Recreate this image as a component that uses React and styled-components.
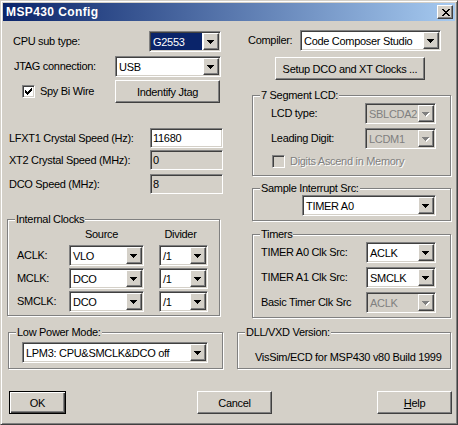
import React from 'react';
import styled, { createGlobalStyle, css } from 'styled-components';

const C = {
  face: '#d4d0c8',
  hi: '#ffffff',
  shadow: '#808080',
  dark: '#404040',
  navy: '#0a246a',
};

const Global = createGlobalStyle`
  html, body { margin: 0; padding: 0; background: ${C.face}; }
  body {
    font-family: "Liberation Sans", Arial, sans-serif;
    font-size: 11px;
    letter-spacing: -0.3px;
    color: #000;
  }
  * { box-sizing: border-box; }
`;

const sunken = css`
  border: 1px solid;
  border-color: ${C.shadow} ${C.hi} ${C.hi} ${C.shadow};
  box-shadow: inset 1px 1px 0 ${C.dark}, inset -1px -1px 0 ${C.face};
`;

const raised = css`
  border: 1px solid;
  border-color: ${C.hi} ${C.dark} ${C.dark} ${C.hi};
  box-shadow: inset -1px -1px 0 ${C.shadow}, inset 1px 1px 0 ${C.face};
`;

const Window = styled.div`
  width: 458px;
  height: 425px;
  display: flex;
  flex-direction: column;
  background: ${C.face};
  border: 1px solid;
  border-color: ${C.face} ${C.dark} ${C.dark} ${C.face};
  box-shadow: inset 1px 1px 0 ${C.hi}, inset -1px -1px 0 ${C.shadow};
  padding: 2px;
`;

const TitleBar = styled.div`
  height: 18px;
  flex-shrink: 0;
  margin-bottom: 1px;
  display: flex;
  align-items: center;
  padding: 0 2px 0 3px;
  background: linear-gradient(to right, ${C.navy}, #a6caf0);
`;

const Title = styled.span`
  color: #fff;
  font-weight: bold;
  font-size: 12px;
  letter-spacing: 0.4px;
`;

const CloseBtn = styled.div`
  ${raised};
  margin-left: auto;
  width: 16px;
  height: 14px;
  background: ${C.face};
  display: flex;
  align-items: center;
  justify-content: center;
  padding-left: 1px;
`;

const Columns = styled.div`
  display: flex;
  gap: 14px;
  padding: 0 4px;
`;

const Column = styled.div`
  display: flex;
  flex-direction: column;
  align-items: flex-start;
  width: ${(p) => p.$w}px;
  flex-shrink: 0;
`;

const Row = styled.div`
  display: flex;
  align-items: center;
  flex-shrink: 0;
  height: ${(p) => p.$h || 21}px;
  margin-top: ${(p) => p.$mt || 0}px;
  padding-left: ${(p) => p.$pl || 0}px;
`;

const Label = styled.span`
  display: block;
  width: ${(p) => (p.$w ? `${p.$w}px` : 'auto')};
  flex-shrink: 0;
  white-space: nowrap;
  line-height: 13px;
`;

const ComboBox = styled.div`
  ${sunken};
  width: ${(p) => p.$w}px;
  height: 21px;
  flex-shrink: 0;
  display: flex;
  padding: 1px;
  background: ${(p) => (p.$disabled ? C.face : C.hi)};
`;

const ComboValue = styled.div`
  flex: 1;
  min-width: 0;
  display: flex;
  align-items: center;
  white-space: nowrap;
  overflow: hidden;
  padding-left: 2px;
  margin-right: 1px;
  background: ${(p) => (p.$selected ? C.navy : 'transparent')};
  color: ${(p) => (p.$selected ? '#fff' : p.$disabled ? C.shadow : '#000')};
`;

const DropBtn = styled.div`
  ${raised};
  width: 16px;
  height: 100%;
  flex-shrink: 0;
  background: ${C.face};
  display: flex;
  align-items: center;
  justify-content: center;
  padding-top: 1px;
`;

const Edit = styled.div`
  ${sunken};
  width: ${(p) => p.$w}px;
  height: 20px;
  flex-shrink: 0;
  display: flex;
  align-items: center;
  padding: 1px 1px 1px 2px;
  background: ${(p) => (p.$readonly ? C.face : C.hi)};
`;

const Button = styled.button`
  ${raised};
  width: ${(p) => p.$w}px;
  height: 23px;
  flex-shrink: 0;
  margin: ${(p) => p.$mt || 0}px 0 0 ${(p) => (p.$push ? 'auto' : `${p.$ml || 0}px`)};
  padding: 0;
  background: ${C.face};
  font: inherit;
  letter-spacing: inherit;
  color: #000;
  ${(p) =>
    p.$default &&
    css`
      border: 1px solid #000;
      box-shadow: inset 1px 1px 0 ${C.hi}, inset -1px -1px 0 ${C.dark},
        inset -2px -2px 0 ${C.shadow};
    `}
`;

const CheckWrap = styled.div`
  display: flex;
  align-items: center;
  gap: 5px;
  width: ${(p) => (p.$w ? `${p.$w}px` : 'auto')};
  flex-shrink: 0;
  margin-left: ${(p) => p.$ml || 0}px;
`;

const CheckBox = styled.div`
  ${sunken};
  width: 13px;
  height: 13px;
  flex-shrink: 0;
  background: ${(p) => (p.$disabled ? C.face : C.hi)};
  display: flex;
  align-items: center;
  justify-content: center;
`;

const CheckText = styled.span`
  white-space: nowrap;
  line-height: 13px;
  color: ${(p) => (p.$disabled ? C.shadow : '#000')};
  text-shadow: ${(p) => (p.$disabled ? `1px 1px 0 ${C.hi}` : 'none')};
`;

const Group = styled.fieldset`
  margin: ${(p) => p.$mt}px 0 0 ${(p) => p.$ml || 0}px;
  padding: 0;
  width: ${(p) => p.$w}px;
  height: ${(p) => p.$h}px;
  min-inline-size: 0;
  flex-shrink: 0;
  border: 1px solid ${C.shadow};
  box-shadow: inset 1px 1px 0 ${C.hi}, 1px 1px 0 ${C.hi};
`;

const Legend = styled.legend`
  margin-left: 7px;
  padding: 0 1px;
  line-height: 13px;
  background: ${C.face};
  white-space: nowrap;
`;

const GroupBody = styled.div`
  display: flex;
  flex-direction: column;
  align-items: flex-start;
  padding: ${(p) => p.$pt || 0}px 0 0 ${(p) => p.$pl || 0}px;
`;

const ClockGrid = styled.div`
  display: grid;
  grid-template-columns: 37px 75px 49px;
  column-gap: 15px;
  row-gap: 2px;
  padding: 2px 0 0 9px;
`;

const ColHead = styled.div`
  line-height: 13px;
  margin-bottom: 2px;
  text-align: center;
  padding-right: ${(p) => p.$pr || 0}px;
  white-space: nowrap;
`;

const GridLabel = styled.div`
  align-self: center;
  line-height: 13px;
  white-space: nowrap;
`;

const StaticText = styled.div`
  line-height: 13px;
  white-space: nowrap;
`;

const ButtonRow = styled.div`
  display: flex;
  margin-top: 22px;
  padding: 0 3px 0 6px;
`;

const ARROW = 'M0 0h7v1H0z M1 1h5v1H1z M2 2h3v1H2z M3 3h1v1H3z';
const CHECK =
  'M6 0h1v1h-1z M5 1h2v1h-2z M0 2h1v1H0z M4 2h3v1H4z M0 3h2v1H0z M3 3h3v1H3z M0 4h5v1H0z M1 5h3v1H1z M2 6h1v1H2z';
const CLOSE =
  'M0 0h2v1H0z M6 0h2v1H6z M1 1h2v1H1z M5 1h2v1H5z M2 2h4v1H2z M3 3h2v1H3z M2 4h4v1H2z M1 5h2v1H1z M5 5h2v1H5z M0 6h2v1H0z M6 6h2v1H6z';

const Arrow = ({ disabled }) => (
  <svg width="8" height="5" viewBox="0 0 8 5" shapeRendering="crispEdges">
    {disabled && <path d={ARROW} fill={C.hi} transform="translate(1,1)" />}
    <path d={ARROW} fill={disabled ? C.shadow : '#000'} />
  </svg>
);

const Combo = ({ w, value, selected, disabled }) => (
  <ComboBox $w={w} $disabled={disabled}>
    <ComboValue $selected={selected} $disabled={disabled}>
      {value}
    </ComboValue>
    <DropBtn>
      <Arrow disabled={disabled} />
    </DropBtn>
  </ComboBox>
);

const Check = ({ checked, disabled, label, w, ml }) => (
  <CheckWrap $w={w} $ml={ml}>
    <CheckBox $disabled={disabled}>
      {checked && (
        <svg width="7" height="7" viewBox="0 0 7 7" shapeRendering="crispEdges">
          <path d={CHECK} fill="#000" />
        </svg>
      )}
    </CheckBox>
    <CheckText $disabled={disabled}>{label}</CheckText>
  </CheckWrap>
);

const clocks = [
  { name: 'ACLK:', src: 'VLO', div: '/1' },
  { name: 'MCLK:', src: 'DCO', div: '/1' },
  { name: 'SMCLK:', src: 'DCO', div: '/1' },
];

export default function App() {
  return (
    <>
      <Global />
      <Window>
        <TitleBar>
          <Title>MSP430 Config</Title>
          <CloseBtn>
            <svg width="8" height="7" viewBox="0 0 8 7" shapeRendering="crispEdges">
              <path d={CLOSE} fill="#000" />
            </svg>
          </CloseBtn>
        </TitleBar>

        <Columns>
          <Column $w={216}>
            <Row $mt={9} $pl={6}>
              <Label $w={136}>CPU sub type:</Label>
              <Combo w={72} value="G2553" selected />
            </Row>
            <Row $mt={4} $pl={7}>
              <Label $w={101}>JTAG connection:</Label>
              <Combo w={106} value="USB" />
            </Row>
            <Row $mt={3} $h={23} $pl={15}>
              <Check w={93} checked label="Spy Bi Wire" />
              <Button $w={105}>Indentify Jtag</Button>
            </Row>
            <Row $mt={25} $h={20} $pl={2}>
              <Label $w={141}>LFXT1 Crystal Speed (Hz):</Label>
              <Edit $w={73}>11680</Edit>
            </Row>
            <Row $mt={2} $h={20} $pl={2}>
              <Label $w={141}>XT2 Crystal Speed (MHz):</Label>
              <Edit $w={73} $readonly>0</Edit>
            </Row>
            <Row $mt={4} $h={20} $pl={2}>
              <Label $w={141}>DCO Speed (MHz):</Label>
              <Edit $w={73} $readonly>8</Edit>
            </Row>

            <Group $mt={19} $w={213} $h={103}>
              <Legend>Internal Clocks</Legend>
              <ClockGrid>
                <div />
                <ColHead $pr={10}>Source</ColHead>
                <ColHead $pr={6}>Divider</ColHead>
                {clocks.map((c) => (
                  <React.Fragment key={c.name}>
                    <GridLabel>{c.name}</GridLabel>
                    <Combo w={75} value={c.src} />
                    <Combo w={49} value={c.div} />
                  </React.Fragment>
                ))}
              </ClockGrid>
            </Group>

            <Group $mt={10} $ml={1} $w={215} $h={43}>
              <Legend>Low Power Mode:</Legend>
              <GroupBody $pt={3} $pl={13}>
                <Combo w={186} value="LPM3: CPU&SMCLK&DCO off" />
              </GroupBody>
            </Group>
          </Column>

          <Column $w={214}>
            <Row $mt={8} $pl={11}>
              <Label $w={52}>Compiler:</Label>
              <Combo w={141} value="Code Composer Studio" />
            </Row>
            <Button $w={150} $mt={6} $ml={38}>
              Setup DCO and XT Clocks ...
            </Button>

            <Group $mt={9} $ml={15} $w={199} $h={87}>
              <Legend>7 Segment LCD:</Legend>
              <GroupBody $pt={1} $pl={18}>
                <Row>
                  <Label $w={94}>LCD type:</Label>
                  <Combo w={71} value="SBLCDA2" disabled />
                </Row>
                <Row $mt={4}>
                  <Label $w={94}>Leading Digit:</Label>
                  <Combo w={71} value="LCDM1" disabled />
                </Row>
                <Row $mt={6} $h={13}>
                  <Check ml={1} disabled label="Digits Ascend in Memory" />
                </Row>
              </GroupBody>
            </Group>

            <Group $mt={6} $ml={15} $w={199} $h={39}>
              <Legend>Sample Interrupt Src:</Legend>
              <GroupBody $pl={49}>
                <Combo w={134} value="TIMER A0" />
              </GroupBody>
            </Group>

            <Group $mt={7} $ml={15} $w={199} $h={90}>
              <Legend>Timers</Legend>
              <GroupBody $pt={1} $pl={8}>
                <Row>
                  <Label $w={105}>TIMER A0 Clk Src:</Label>
                  <Combo w={70} value="ACLK" />
                </Row>
                <Row $mt={4}>
                  <Label $w={105}>TIMER A1 Clk Src:</Label>
                  <Combo w={70} value="SMCLK" />
                </Row>
                <Row $mt={4}>
                  <Label $w={105}>Basic Timer Clk Src</Label>
                  <Combo w={70} value="ACLK" disabled />
                </Row>
              </GroupBody>
            </Group>

            <Group $mt={8} $w={214} $h={43}>
              <Legend>DLL/VXD Version:</Legend>
              <GroupBody $pt={12} $pl={17}>
                <StaticText>VisSim/ECD for MSP430 v80 Build 1999</StaticText>
              </GroupBody>
            </Group>
          </Column>
        </Columns>

        <ButtonRow>
          <Button $w={57} $default>
            OK
          </Button>
          <Button $w={75} $ml={131}>
            Cancel
          </Button>
          <Button $w={75} $push>
            <u>H</u>elp
          </Button>
        </ButtonRow>
      </Window>
    </>
  );
}
